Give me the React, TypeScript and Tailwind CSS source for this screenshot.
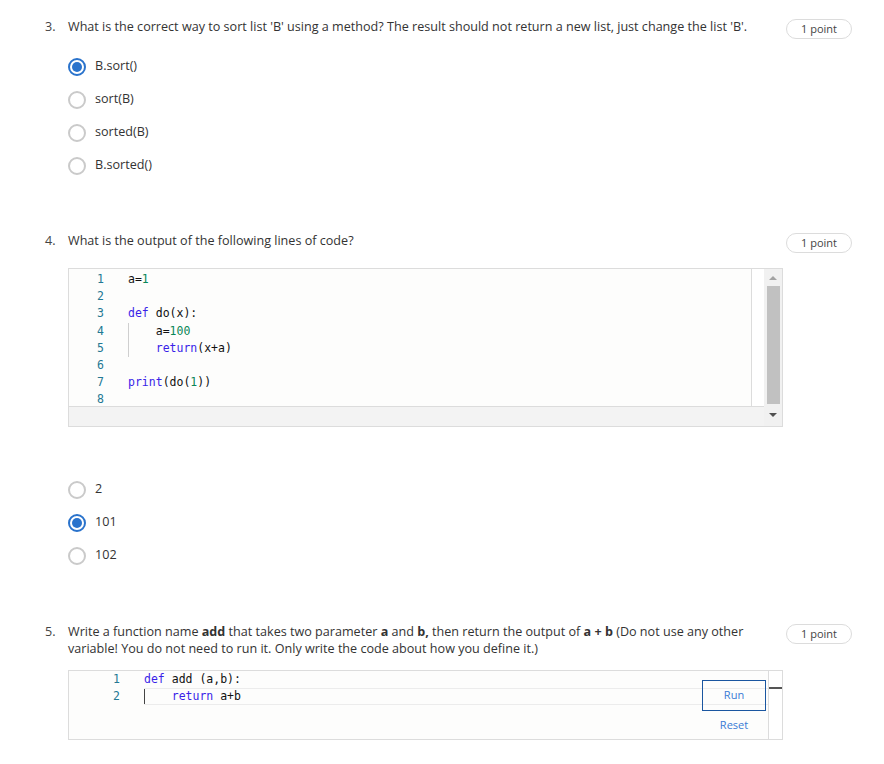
import React from "react";

const KW = "text-[#3a1fe8]";
const NUM = "text-[#098658]";

function Radio({ checked }: { checked?: boolean }) {
  if (checked) {
    return (
      <span className="w-[18px] h-[18px] rounded-full border-2 border-[#2a73cc] flex items-center justify-center shrink-0">
        <span className="w-[10px] h-[10px] rounded-full bg-[#2a73cc]" />
      </span>
    );
  }
  return <span className="w-[18px] h-[18px] rounded-full border-2 border-[#cacaca] shrink-0" />;
}

function Option({ label, checked }: { label: string; checked?: boolean }) {
  return (
    <div className="flex items-center h-[33px] gap-[9px]">
      <Radio checked={checked} />
      <span className="text-[12.6px] text-[#333]">{label}</span>
    </div>
  );
}

function Badge() {
  return (
    <div className="w-[66px] h-[20px] mt-[1px] mb-[-4px] ml-[3px] shrink-0 rounded-full border border-[#dcdcdc] flex items-center justify-center text-[11px] text-[#444]">
      1 point
    </div>
  );
}

function Header({ n, children }: { n: string; children: React.ReactNode }) {
  return (
    <div className="flex items-start">
      <div className="w-[23px] shrink-0 leading-[17px] text-[#444]">{n}</div>
      <div className="flex-1 leading-[17px] text-[#333]">{children}</div>
      <Badge />
    </div>
  );
}

const q4Lines: React.ReactNode[] = [
  <>a=<span className={NUM}>1</span></>,
  <></>,
  <><span className={KW}>def</span> do(x):</>,
  <>{"    "}a=<span className={NUM}>100</span></>,
  <>{"    "}<span className={KW}>return</span>(x+a)</>,
  <></>,
  <><span className={KW}>print</span>(do(<span className={NUM}>1</span>))</>,
  <></>,
];

export default function App() {
  return (
    <div className="w-[884px] min-h-[764px] bg-white font-['Open_Sans',sans-serif] text-[12.6px] text-[#333]">
      <div className="pl-[45px] pr-[32px] pt-[18px] pb-[24px]">
        {/* Q3 */}
        <Header n="3.">
          What is the correct way to sort list 'B' using a method? The result should not return a new list, just change the list 'B'.
        </Header>
        <div className="ml-[23px] mt-[15px]">
          <Option label="B.sort()" checked />
          <Option label="sort(B)" />
          <Option label="sorted(B)" />
          <Option label="B.sorted()" />
        </div>

        {/* Q4 */}
        <div className="mt-[50px]">
          <Header n="4.">What is the output of the following lines of code?</Header>
        </div>
        <div className="ml-[23px] mt-[19px] w-[715px] h-[159px] border border-[#dcdcdc] flex">
          <div className="flex-1 flex flex-col">
            <div className="h-[138px] flex border-b border-[#dcdcdc]">
              <div className="flex-1 bg-[#fdfdfc] border-r border-[#dcdcdc] pt-[2px] font-['DejaVu_Sans_Mono',monospace] text-[11.5px] leading-[17.2px]">
                {q4Lines.map((l, i) => (
                  <div key={i} className="flex h-[17.2px]">
                    <div className="w-[35px] text-right text-[#237893]">{i + 1}</div>
                    <div className="ml-[24px] whitespace-pre text-[#111] relative">
                      {(i === 3 || i === 4) && (
                        <span className="absolute left-0 top-0 h-full w-px bg-[#cfcfcf]" />
                      )}
                      {l}
                    </div>
                  </div>
                ))}
              </div>
              <div className="w-[12px] bg-white" />
            </div>
            <div className="flex-1 bg-[#f3f3f3]" />
          </div>
          <div className="w-[18px] bg-[#f1f1f1] flex flex-col items-center">
            <div className="h-[17px] flex items-center justify-center">
              <span className="w-0 h-0 border-l-[4px] border-r-[4px] border-b-[4px] border-l-transparent border-r-transparent border-b-[#a3a3a3]" />
            </div>
            <div className="w-[13px] h-[118px] bg-[#c1c1c1]" />
            <div className="flex-1 flex items-center justify-center">
              <span className="w-0 h-0 border-l-[4px] border-r-[4px] border-t-[4px] border-l-transparent border-r-transparent border-t-[#505050]" />
            </div>
          </div>
        </div>
        <div className="ml-[23px] mt-[46px]">
          <Option label="2" />
          <Option label="101" checked />
          <Option label="102" />
        </div>

        {/* Q5 */}
        <div className="mt-[51px]">
          <Header n="5.">
            Write a function name <b>add</b> that takes two parameter <b>a</b> and <b>b,</b> then return the output of{" "}
            <b>a + b</b> (Do not use any other variable! You do not need to run it. Only write the code about how you define it.)
          </Header>
        </div>
        <div className="ml-[23px] mt-[13px] w-[715px] h-[70px] border border-[#dcdcdc] flex relative">
          <div className="flex-1 bg-[#fdfdfc] border-r border-[#dcdcdc] font-['DejaVu_Sans_Mono',monospace] text-[11.5px] leading-[17.2px]">
            <div className="flex h-[17.2px]">
              <div className="w-[51px] text-right text-[#237893]">1</div>
              <div className="ml-[24px] whitespace-pre text-[#111]">
                <span className={KW}>def</span> add (a,b):
              </div>
            </div>
            <div className="flex h-[17px]">
              <div className="w-[51px] text-right text-[#237893]">2</div>
              <div className="ml-[24px] flex-1 whitespace-pre text-[#111] border-y border-[#ececec] relative leading-[15px]">
                <span className="absolute left-0 top-0 h-full w-px bg-[#444]" />
                {"    "}<span className={KW}>return</span> a+b
              </div>
            </div>
          </div>
          <div className="w-[13px] bg-white relative">
            <span className="absolute left-0 right-0 top-[16px] h-[2px] bg-[#555]" />
          </div>
          <div className="absolute left-[633px] top-[9px] w-[64px] h-[31px] border border-[#1a56a0] flex items-center justify-center text-[11px] text-[#3a7bd5]">
            Run
          </div>
          <div className="absolute left-[633px] top-[46px] w-[64px] text-center text-[11px] text-[#3a7bd5]">
            Reset
          </div>
        </div>
      </div>
    </div>
  );
}
